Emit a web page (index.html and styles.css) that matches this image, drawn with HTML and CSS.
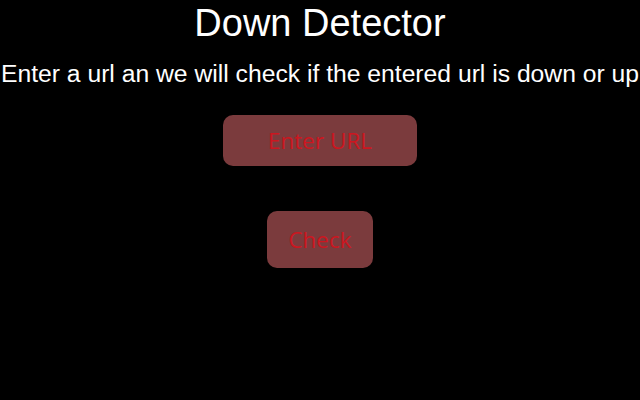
FILE: index.html
```html
<!DOCTYPE html>
<html>
<head>
<meta charset="utf-8">
<link rel="stylesheet" href="styles.css">
</head>
<body>
<main class="page">
  <h1 class="title">Down Detector</h1>
  <p class="subtitle">Enter a url an we will check if the entered url is down or up</p>
  <input class="url-input" type="text" placeholder="Enter URL">
  <button class="check-btn" type="button">Check</button>
</main>
</body>
</html>
```
FILE: styles.css
```css
html, body {
  margin: 0;
  padding: 0;
  background: #000;
  height: 100%;
}
.page {
  display: flex;
  flex-direction: column;
  align-items: center;
  font-family: "Liberation Sans", Arial, sans-serif;
  color: #fff;
  overflow: hidden;
  width: 640px;
}
.title {
  margin: 2px 0 0 0;
  font-size: 38px;
  font-weight: normal;
  line-height: 42px;
  white-space: nowrap;
}
.subtitle {
  margin: 16px 0 0 0;
  font-size: 24.7px;
  line-height: 27px;
  white-space: nowrap;
}
.url-input,
.check-btn {
  box-sizing: border-box;
  background: #7b3b3d;
  border: none;
  border-radius: 10px;
  color: #cc1620;
  font-family: "Open Sans", "Noto Sans", sans-serif;
  font-size: 22.5px;
  text-align: center;
  outline: none;
}
.url-input {
  margin-top: 28px;
  width: 194px;
  height: 51px;
}
.url-input::placeholder {
  color: #cc1620;
  opacity: 1;
}
.check-btn {
  margin-top: 45px;
  width: 106px;
  height: 57px;
  padding: 0;
}
```
